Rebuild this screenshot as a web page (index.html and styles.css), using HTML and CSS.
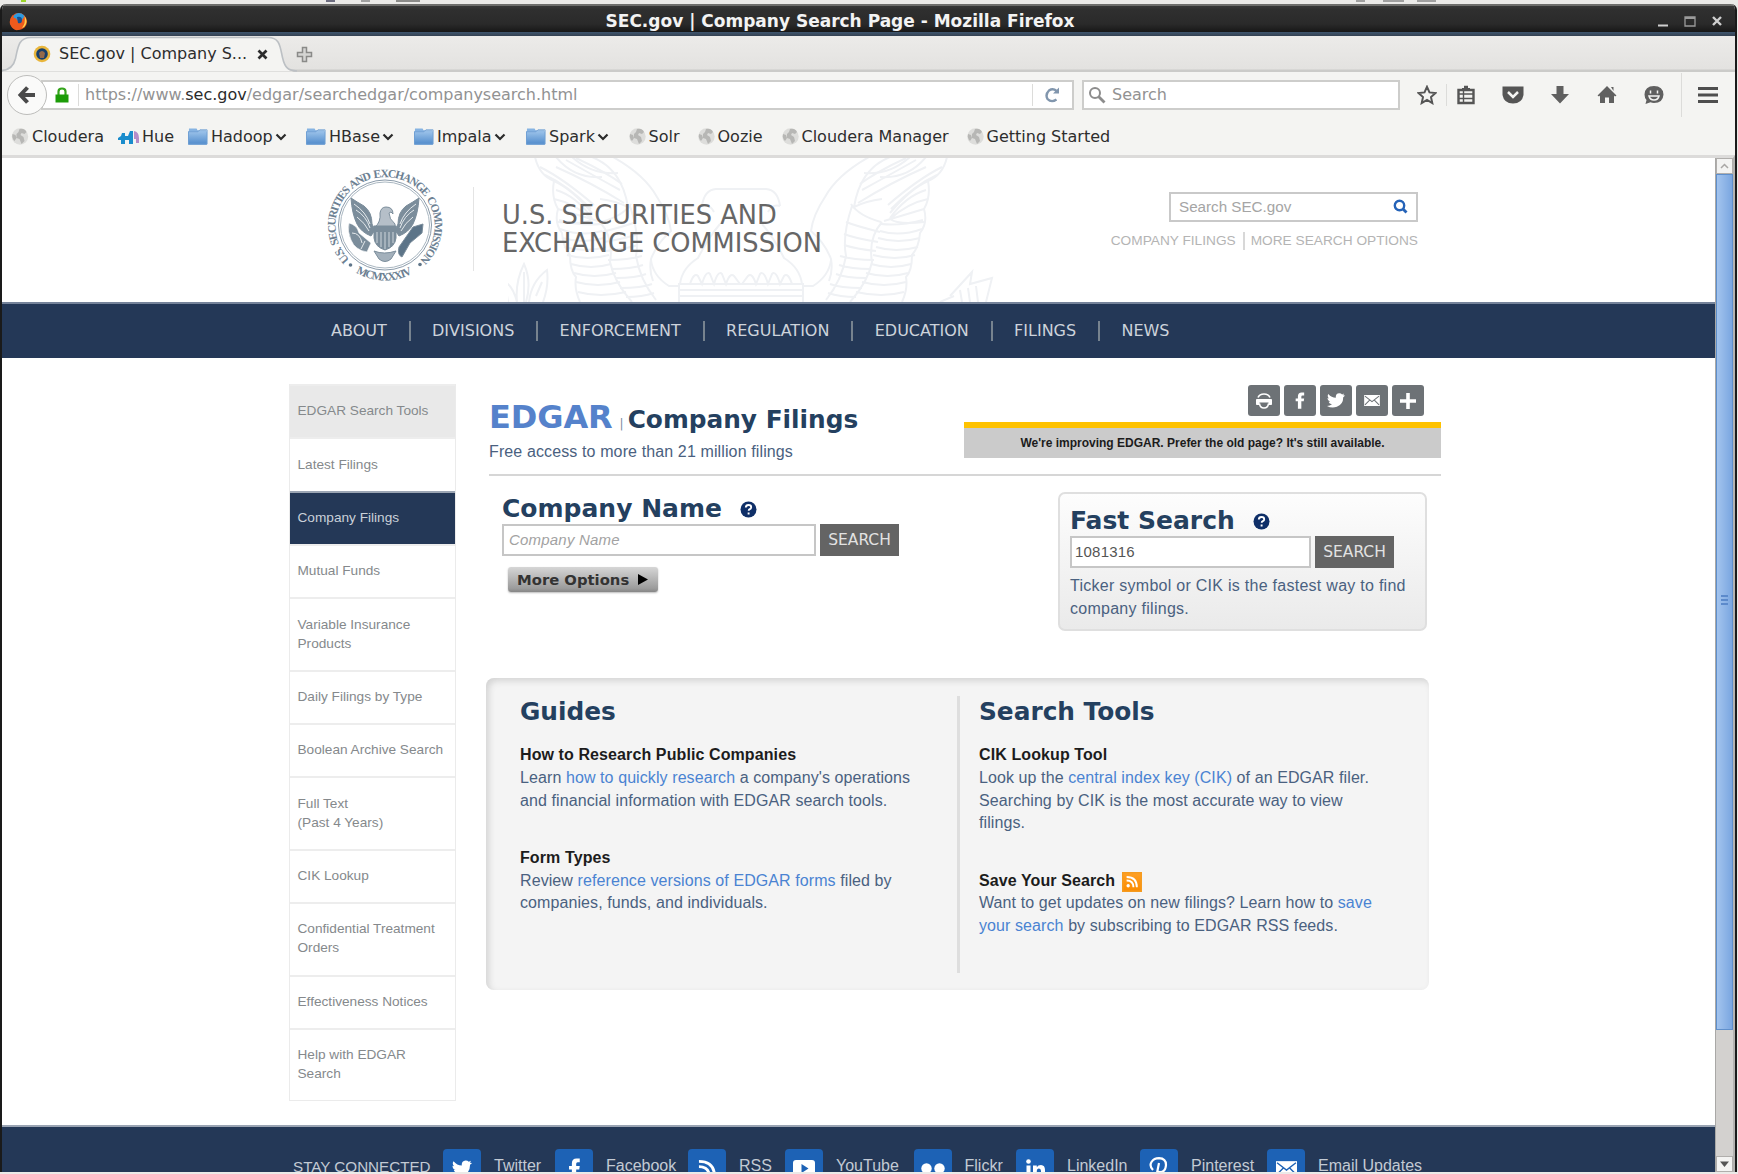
FILE: index.html
```html
<!DOCTYPE html>
<html lang="en">
<head>
<meta charset="utf-8">
<title>SEC.gov | Company Search Page</title>
<link rel="stylesheet" href="styles.css">
</head>
<body>
<svg class="defs" width="0" height="0">
  <defs>
    <linearGradient id="fold" x1="0" y1="0" x2="0" y2="1"><stop offset="0" stop-color="#9cc3ea"/><stop offset="1" stop-color="#4f8acb"/></linearGradient>
    <linearGradient id="rssg" x1="0" y1="0" x2="0" y2="1"><stop offset="0" stop-color="#ff9f24"/><stop offset="1" stop-color="#fb8c00"/></linearGradient>
    <symbol id="globe" viewBox="0 0 17 17"><circle cx="8.5" cy="8.5" r="8.2" fill="#dddddb"/><path d="M8 1q5-1 7 3l-2 2-3-1-1 2 3 2 1 4-3 3-2-5-3-1V6l2-2zM1 6l3 1 1 3-2 3Q0 10 1 6z" fill="#b7b7b5"/></symbol>
    <symbol id="folder" viewBox="0 0 21 19"><path d="M1 1h8l1 2h9v15H1z" fill="#86b3e2"/><path d="M0 4h20v14H0z" fill="url(#fold)"/><path d="M.5 17.500V4.500h10l2-2H20v15z" fill="none" stroke="#6f9fd3"/></symbol>
    <symbol id="chev" viewBox="0 0 12 8"><path d="M1.500 1.500 6 6l4.500-4.500" fill="none" stroke="#2b2b2b" stroke-width="2.200"/></symbol>
    <symbol id="help" viewBox="0 0 17 17"><circle cx="8.500" cy="8.500" r="8" fill="#0f2f68"/><path d="M5.800 6.500q.1-2.500 2.700-2.500 2.700 0 2.700 2.200 0 1.300-1.400 2-1.100.6-1.100 1.600M8.600 11.500v2" fill="none" stroke="#fff" stroke-width="1.900"/></symbol>
    <symbol id="bird" viewBox="0 0 20 16"><path d="M20 2.500q-1 1.300-2 1.800.2 8-7 10.700Q5 17 0 14q3.400 0 5.500-1.800-3-.3-3.700-2.700h1.700Q.5 8.500.5 5.200l1.700.6Q-.2 3.500 1.500.8 5 5 9.800 5 9.300.4 13.500 0q2-.1 3.300 1.200L19 .3l-1 2z"/></symbol>
    <symbol id="fb" viewBox="0 0 12 20"><path d="M3.500 20v-9H.8V7.500h2.700V5Q3.500.4 8 .4h3V4H9Q7.600 4 7.600 5.500v2H11L10.500 11H7.600v9z"/></symbol>
    <symbol id="mail" viewBox="0 0 20 14"><path d="M0 0h20v14H0z"/><path d="m1 1.500 9 7 9-7M1 12.500l6-6M19 12.500l-6-6" fill="none" stroke="var(--tile)" stroke-width="1.300"/></symbol>
    <symbol id="rss" viewBox="0 0 20 20"><circle cx="3.500" cy="16.500" r="2.700"/><path d="M1 8q11 0 11 11M1 2.500q16.500 0 16.500 16.500" fill="none" stroke="currentColor" stroke-width="3"/></symbol>
  </defs>
</svg>

<div class="desktop">
  <div class="peek"><i></i><i></i><i></i><i></i><i></i><i></i><i></i></div>
  <div class="window">
    <div class="titlebar">
      <svg class="ffx" width="19" height="19" viewBox="0 0 19 19"><circle cx="9.500" cy="9.500" r="8.500" fill="#e2521c"/><circle cx="10" cy="7.500" r="6.500" fill="#2d9be0"/><path d="M9 9q5 0 6-5 4 5 1.500 9T9 18 1 12Q0 7 4 3q0 3 3 3.500z" fill="#ee5a1d"/><path d="M15.500 4q3 4 1.500 8-1 3-4 4 4-5 2.500-12z" fill="#ffd24a"/><path d="M8 5q5-1 5 3t-4 3z" fill="#16508f"/></svg>
      <h1>SEC.gov | Company Search Page - Mozilla Firefox</h1>
      <svg class="wbtns" width="70" height="16" viewBox="0 0 70 16" fill="none" stroke="#cfcfcf"><path d="M2 12.500h10" stroke-width="2.200"/><path d="M29 4h10v9H29z" stroke="#9b9b9b" stroke-width="1.300"/><path d="M29 5h10" stroke="#9b9b9b" stroke-width="2"/><path d="m57 4 8 8m0-8-8 8" stroke-width="2.400"/></svg>
    </div>

    <div class="tabs">
      <svg width="310" height="36" viewBox="0 0 310 36"><path d="M0 35.500q11-1 13.500-12C16 10 17 1.500 29 1.500h237c12 0 12 9 14.500 20 2.500 12 6 14 14.500 14z" fill="#f4f4f2"/><path d="M0 34.500q11-1 13.500-12C16 10 17 1.500 29 1.500h237c12 0 12 9 14.500 20 2.500 11 6 13 14.500 13.500" fill="none" stroke="#bcc0c4" stroke-width="1.600"/>
        <circle cx="40" cy="18" r="8.300" fill="#e9b63c"/><circle cx="40" cy="18" r="5.800" fill="#173f6b"/><path d="M37 17q3-4 6 0l-1 5h-4z" fill="#94694a"/></svg>
      <span class="tablabel">SEC.gov | Company S...</span>
      <svg class="tabx" width="11" height="11" viewBox="0 0 11 11"><path d="m1.500 1.500 8 8m0-8-8 8" stroke="#2c2c2c" stroke-width="2.700"/></svg>
      <svg class="newtab" width="17" height="17" viewBox="0 0 17 17"><path d="M6.500 1.500h4v5h5v4h-5v5h-4v-5h-5v-4h5z" fill="#d5d5d3" stroke="#8a8a88" stroke-width="1.500"/></svg>
    </div>

    <div class="toolbar">
      <span class="back"><svg width="20" height="20" viewBox="0 0 20 20"><path d="M10.500 2.500 3.500 10l7 7.500M4 10h14" fill="none" stroke="#4a4a4a" stroke-width="4"/></svg></span>
      <div class="url">
        <svg width="14" height="16" viewBox="0 0 14 16"><path d="M3.500 8V4.500Q3.500 1.500 7 1.500t3.500 3V8" fill="none" stroke="#35a51c" stroke-width="2.200"/><path d="M.5 7.500h13v8H.5z" fill="#1c9c08"/></svg>
        <span class="vsep"></span>
        <span class="addr">https://www.<b>sec.gov</b>/edgar/searchedgar/companysearch.html</span>
        <span class="vsep last"></span>
        <svg class="reload" width="16" height="16" viewBox="0 0 16 16"><path d="M12.500 4Q9 .8 5 3.500 1 7.500 3.500 12q4 4 9 .5" fill="none" stroke="#8196ad" stroke-width="2.400"/><path d="M9 6.500h6V.5z" fill="#8196ad"/></svg>
      </div>
      <div class="find"><svg width="18" height="18" viewBox="0 0 18 18" fill="none" stroke="#8c8c8c"><circle cx="7" cy="7" r="5" stroke-width="2"/><path d="m10.500 10.500 6 6" stroke-width="2.800"/></svg><span>Search</span></div>
      <div class="tools">
        <svg width="20" height="20" viewBox="0 0 20 20"><path d="m10 1.800 2.500 5.600 6 .7-4.500 4 1.300 6L10 15l-5.300 3.100 1.300-6-4.500-4 6-.7z" fill="none" stroke="#555" stroke-width="2"/></svg>
        <span class="vsep"></span>
        <svg width="20" height="20" viewBox="0 0 20 20"><path d="M2.500 5h15v13h-15z" fill="#f4f4f2" stroke="#555" stroke-width="2.400"/><path d="M6 5V3h2V.8h4V3h2v2z" fill="#555"/><path d="M3 9h14M3 13.500h14M7.500 5v12" stroke="#555" stroke-width="1.400"/></svg>
        <svg width="22" height="20" viewBox="0 0 22 20"><path d="M.5 1.500h21V10Q20 18.500 11 18.500T.5 10z" fill="#555"/><path d="m6 7 5 5 5-5" fill="none" stroke="#f4f4f2" stroke-width="2.500"/></svg>
        <svg width="20" height="20" viewBox="0 0 20 20"><path d="M6.500 1h7v8H19l-9 9.500L1 9h5.500z" fill="#606060"/></svg>
        <svg width="20" height="20" viewBox="0 0 20 20"><path d="m10 1 9.500 9.500-1.500 1-1-1V18h-5v-5.500H8V18H3v-7.500l-1 1-1.500-1z" fill="#606060"/><path d="M14 2h2.500v4z" fill="#606060"/></svg>
        <svg width="20" height="20" viewBox="0 0 20 20"><path d="M10 1q9 0 9.500 8.500Q19 18 10 18q-2 0-3.500-.7L1.500 19l1-4Q.5 13 .5 9.500.8 1 10 1z" fill="#606060"/><path d="M6.500 5.500v3M13.500 5.500v3M5 11h10q-1 4-5 4t-5-4z" stroke="#f4f4f2" fill="none" stroke-width="1.500"/></svg>
        <span class="vsep tall"></span>
        <svg width="20" height="20" viewBox="0 0 20 20"><path d="M0 3.500h20M0 10h20M0 16.500h20" stroke="#4e4e4e" stroke-width="3"/></svg>
      </div>
    </div>

    <div class="bookmarks">
      <span><svg width="18" height="17"><use href="#globe"/></svg>Cloudera</span>
      <span><svg width="21" height="16" viewBox="0 0 21 16"><path d="M0 9l3-2 1-3h3v3h3l2-5h3v13h-4v-4H7v4H3v-4H0z" fill="#1a8ccc"/><path d="M16 2q5 1 5 7v5h-3v-4h-2z" fill="#b58cc9"/></svg>Hue</span>
      <span><svg width="20" height="19"><use href="#folder"/></svg>Hadoop<svg class="c" width="12" height="8"><use href="#chev"/></svg></span>
      <span><svg width="20" height="19"><use href="#folder"/></svg>HBase<svg class="c" width="12" height="8"><use href="#chev"/></svg></span>
      <span><svg width="20" height="19"><use href="#folder"/></svg>Impala<svg class="c" width="12" height="8"><use href="#chev"/></svg></span>
      <span><svg width="20" height="19"><use href="#folder"/></svg>Spark<svg class="c" width="12" height="8"><use href="#chev"/></svg></span>
      <span><svg width="17" height="17"><use href="#globe"/></svg>Solr</span>
      <span><svg width="17" height="17"><use href="#globe"/></svg>Oozie</span>
      <span><svg width="17" height="17"><use href="#globe"/></svg>Cloudera Manager</span>
      <span><svg width="17" height="17"><use href="#globe"/></svg>Getting Started</span>
    </div>

    <div class="view">
      <div class="page">
        <header class="head">
          <svg class="mark" width="500" height="145" viewBox="508 157 500 145" fill="none" stroke="#eff1f4" stroke-width="2">
            <g id="wing">
              <path d="M535 157q4 18 19 24-3 16 4 28-4 14 4 24 1 14 8 22 0 16 6 22-2 12 4 25M556 157q18 22 46 20M572 157q20 18 46 16M592 157q30 12 36 50-12-6-28-8M613 157q32 18 44 40 12 18 14 34-14 12-20 28-2 12 2 22"/>
              <path d="M540 167q24 12 54 38M545 175q22 10 46 34M554 181q18 8 38 32M556 190q20 6 36 28M554 199q20 4 38 20q-8 6-34 3M558 209q20 6 40 12M559 220q22 6 42 4M560 229q22 8 42 2M562 238q22 6 42 0M564 247q22 6 42 0M567 255q20 6 42 0M571 264q20 6 40 0M574 273q20 6 42 0M576 282q22 6 44 0M578 292q22 6 48 0"/>
              <path d="M566 160q32 18 54 30M576 158q30 14 46 26M556 167q36 16 68 36M601 222q22-6 30-18M602 232q24-6 34-10M604 242q24-4 34-8M606 251q20-2 32-6M608 260q20 0 34-4M611 269q20 0 32-4M616 278q20 0 30-4M620 288q22 0 32-4M626 297q16 0 28-4M600 222q14 16 10 40 4 20 22 40M630 206q10 30 6 50 4 24 20 44"/>
              <path d="M651 260q2 16 18 26h10M680 284q2-16 18-26 10-20 22-34M690 284q4-12 8-8l4 8q4-14 8-10l4 10q4-14 8-10l4 10q4-12 8-8l6 8M678 284h64M678 290h64M678 296h64M679 284v18M702 206q2-16 14-17h26M702 206q8-2 12 6"/>
            </g>
            <use href="#wing" transform="translate(1482 0) scale(-1 1)"/>
            <path d="M508 302l-3-20q8 4 12 20M517 302q-2-20 7-38 8 18 2 38M529 302q2-20 18-32 2 16-4 32M524 272v30M536 296l6-14M950 296l22-24-2 12 22-6-6 24M960 290l2 12M968 288l2 14M976 286l2 16M940 302l14-6"/>
          </svg>
          <svg class="seal" width="120" height="122" viewBox="-60 -61 120 122">
            <path id="arcTop" d="M-35.300 34.600A49.500 48.500 0 1 1 35.300 34.600" fill="none"/>
            <path id="arcBot" d="M-29 47.500A56 55.500 0 0 0 29 47.500" fill="none"/>
            <g class="ring" fill="#6c8092"><text><textPath href="#arcTop" textLength="230">U.S. SECURITIES AND EXCHANGE COMMISSION</textPath></text><text><textPath href="#arcBot" textLength="59">MCMXXXIV</textPath></text></g>
            <circle cx="-34.500" cy="40" r="1.800" fill="#60768a"/><circle cx="35" cy="39.500" r="1.800" fill="#60768a"/>
            <ellipse rx="46.500" ry="45" fill="none" stroke="#8b9baa"/><ellipse rx="44.500" ry="43" fill="none" stroke="#aab7c1"/>
            <g fill="#7b8d9b" stroke="#7b8d9b">
              <path d="M-34-27q6 4 13 8 8 6 8 18l3 6-4 6q-10-4-14-12-5-10-6-26z"/><path d="M34-27q-6 4-13 8-8 6-8 18l-3 6 4 6q10-4 14-12 5-10 6-26z"/>
              <path d="M-5-12q1-6 6-6 7 0 7 7l-2-2-2 1q0 6 6 11v6h-20V2q6-5 5-14z" fill="#b5bfc8"/>
              <path d="M-11 1h22v12Q10 22 0 25q-10-3-11-12z"/>
              <path d="M-8 7v11M-4 7v15M0 7v17M4 7v15M8 7v11" stroke="#cfd6dc" fill="none"/>
              <path d="M-36-2q8 2 10 10l12 10-4 9q-12-2-16-12-4-9-2-17z" stroke="#fff" stroke-width=".6"/><path d="m38-1-10 3-14 20q-2 8 3 10l8-14 12-10z" fill="#5c7488"/>
              <path d="M-11 26q10 4 22 0l-5 8q-6 5-12 0z" fill="#a3b0bb"/>
            </g>
            <path d="M-31-21q12 8 16 20M-29-15q10 6 14 18M-28-8q8 6 12 14M31-21q-12 8-16 20M29-15q-10 6-14 18M28-8q-8 6-12 14M-33 8q8 0 10 10M-24 24l4-8" fill="none" stroke="#e4e9ec"/>
          </svg>
          <div class="org">U.S. SECURITIES AND<br>EXCHANGE COMMISSION</div>
          <div class="sitefind">
            <div class="box"><span>Search SEC.gov</span><svg width="15" height="15" viewBox="0 0 15 15" fill="none" stroke="#2563b8"><circle cx="6.500" cy="6.500" r="4.700" stroke-width="2.400"/><path d="m9.500 9.500 4 4" stroke-width="2.800"/></svg></div>
            <div class="links"><span>COMPANY FILINGS</span><span>MORE SEARCH OPTIONS</span></div>
          </div>
        </header>
        <nav class="nav"><a>ABOUT</a><a>DIVISIONS</a><a>ENFORCEMENT</a><a>REGULATION</a><a>EDUCATION</a><a>FILINGS</a><a>NEWS</a></nav>

        <div class="body">
          <aside class="side">
            <a class="top">EDGAR Search Tools</a><a>Latest Filings</a><a class="on">Company Filings</a><a>Mutual Funds</a><a class="two">Variable Insurance Products</a><a>Daily Filings by Type</a><a>Boolean Archive Search</a><a class="two">Full Text<br>(Past 4 Years)</a><a>CIK Lookup</a><a class="two">Confidential Treatment Orders</a><a>Effectiveness Notices</a><a class="two">Help with EDGAR<br>Search</a>
          </aside>
          <main>
            <div class="intro">
              <div class="ttl">
                <h2><span class="edgar">EDGAR</span><span class="bar">|</span>Company Filings</h2>
                <p>Free access to more than 21 million filings</p>
              </div>
              <div class="aside">
                <div class="share">
                  <i><svg width="18" height="18" viewBox="0 0 18 18" fill="none" stroke="#fff"><path d="M3 5.500Q4.500 2 9 2t6 3.500" stroke-width="1.600"/><path d="M1.500 7.500h15v5h-2.500V10H4v2.500H1.500z" fill="#fff"/><path d="M4.500 11.500q.5 4.500 4.500 4.500t4.500-4.500" stroke-width="1.600"/></svg></i>
                  <i><svg width="10" height="17" fill="#fff"><use href="#fb"/></svg></i>
                  <i><svg width="18" height="15" fill="#fff"><use href="#bird"/></svg></i>
                  <i><svg width="16" height="11" fill="#fff"><use href="#mail"/></svg></i>
                  <i><svg width="16" height="16" viewBox="0 0 16 16"><path d="M8 0v16M0 8h16" stroke="#fff" stroke-width="3.600"/></svg></i>
                </div>
                <div class="notice">We're improving EDGAR. Prefer the old page? It's still available.</div>
              </div>
            </div>
            <div class="searches">
              <div class="byname">
                <h3>Company Name<svg width="17" height="17"><use href="#help"/></svg></h3>
                <div class="row"><div class="inp hint">Company Name</div><div class="btn">SEARCH</div></div>
                <div class="more">More Options<svg width="10" height="11" viewBox="0 0 10 11"><path d="M0 0v11l10-5.500z"/></svg></div>
              </div>
              <div class="fast">
                <h3>Fast Search<svg width="17" height="17"><use href="#help"/></svg></h3>
                <div class="row"><div class="inp">1081316</div><div class="btn">SEARCH</div></div>
                <p>Ticker symbol or CIK is the fastest way to find<br>company filings.</p>
              </div>
            </div>
            <div class="panel">
              <section>
                <h3>Guides</h3>
                <h4>How to Research Public Companies</h4>
                <p>Learn <a>how to quickly research</a> a company's operations<br>and financial information with EDGAR search tools.</p>
                <h4>Form Types</h4>
                <p>Review <a>reference versions of EDGAR forms</a> filed by<br>companies, funds, and individuals.</p>
              </section>
              <section class="r">
                <h3>Search Tools</h3>
                <h4>CIK Lookup Tool</h4>
                <p>Look up the <a>central index key (CIK)</a> of an EDGAR filer.<br>Searching by CIK is the most accurate way to view<br>filings.</p>
                <h4>Save Your Search<svg width="20" height="20" viewBox="0 0 20 20"><path d="M0 0h20v20H0z" fill="#f59b20"/><path d="M1.500 1.500h17v17h-17z" fill="url(#rssg)"/><g color="#fff" fill="#fff" transform="translate(4 3.500) scale(.62)"><use href="#rss" width="20" height="20"/></g></svg></h4>
                <p>Want to get updates on new filings? Learn how to <a>save</a><br><a>your search</a> by subscribing to EDGAR RSS feeds.</p>
              </section>
            </div>
          </main>
        </div>

        <footer class="foot">
          <span class="stay">STAY CONNECTED</span>
          <span><i><svg width="20" height="17"><use href="#bird"/></svg></i>Twitter</span>
          <span><i><svg width="13" height="21"><use href="#fb"/></svg></i>Facebook</span>
          <span><i><svg width="19" height="19"><use href="#rss"/></svg></i>RSS</span>
          <span><i><svg width="22" height="17" viewBox="0 0 22 17"><path d="M3 0h16q3 0 3 3v11q0 3-3 3H3q-3 0-3-3V3q0-3 3-3z"/><path d="m8.500 4 7 4.500-7 4.500z" fill="#1d62b5"/></svg></i>YouTube</span>
          <span><i><svg width="24" height="11" viewBox="0 0 24 11"><circle cx="5.500" cy="5.500" r="5.200"/><circle cx="18.500" cy="5.500" r="5.200"/></svg></i>Flickr</span>
          <span><i><svg width="19" height="19" viewBox="0 0 19 19"><circle cx="2.500" cy="2.500" r="2.300"/><path d="M.5 6.500h4V19h-4zM7 6.500h3.800v1.700Q12 6 15 6q4 .2 4 5v8h-4v-7q0-2.500-2-2.500-2.200 0-2.200 2.800V19H7z"/></svg></i>LinkedIn</span>
          <span><i><svg width="20" height="22" viewBox="0 0 20 22"><path d="M4 13Q0 9 2.500 5 5 1.200 10 1.200q7 .3 7 6.800-.5 7-6 7.200-2 0-3-1.500M10 6 7 21" fill="none" stroke="#fff" stroke-width="2.200"/></svg></i>Pinterest</span>
          <span><i><svg width="21" height="15"><use href="#mail"/></svg></i>Email Updates</span>
        </footer>
      </div>
      <div class="scroll">
        <b><svg width="9" height="6" viewBox="0 0 9 6"><path d="m1 5 3.500-3.500L8 5" fill="none" stroke="#a9a7a5" stroke-width="1.500"/></svg></b>
        <div class="thumb"><i></i><i></i><i></i></div>
        <div class="track"></div>
        <b><svg width="9" height="6" viewBox="0 0 9 6"><path d="M0 .5h9L4.500 6z" fill="#555"/></svg></b>
      </div>
    </div>
  </div>
</div>
</body>
</html>
```
FILE: styles.css
```css
* { box-sizing: border-box; }
body, h1, h2, h3, h4, p { margin: 0; }
svg { display: block; flex: none; }
body { width: 1738px; height: 1174px; overflow: hidden; font-family: "Liberation Sans", Arial, sans-serif; }
.defs { position: absolute; }

.desktop { height: 1174px; background: #ebeae8; overflow: hidden; display: flex; flex-direction: column; }
.peek { height: 4px; flex: none; display: grid; grid-template-columns: 21px 305px 35px 35px 960px 33px 40px 200px; align-items: start; }
.peek i { height: 2px; width: 9px; background: #a0a0a0; }
.peek i:nth-child(1) { margin-left: 21px; width: 5px; background: #9bd42a; }
.peek i:nth-child(2) { margin-left: 305px; background: #6d6d80; }
.peek i:nth-child(3) { margin-left: 35px; }
.peek i:nth-child(4) { margin-left: 35px; width: 24px; background: #8b8b89; }
.peek i:nth-child(5) { margin-left: 960px; }
.peek i:nth-child(6) { margin-left: 27px; width: 21px; }
.peek i:nth-child(7) { margin-left: 28px; width: 19px; }

.window { width: 1737px; height: 1168px; border: solid #1a1a1a; border-width: 0 2px; border-radius: 6px 6px 0 0; display: flex; flex-direction: column; background: #f4f4f2; overflow: hidden; }
.titlebar { height: 32px; flex: none; display: flex; align-items: center; padding: 2px 7px 0; color: #f3f3f3; background: linear-gradient(#6e6e6c 0 2px, #383838 2px, #2f2f2f 6px, #2a2a2a 20px, #171717 28px, #3f566f 28px, #344050 32px); }
.titlebar h1 { flex: 1; text-align: center; padding-right: 55px; font: bold 17px/24px "DejaVu Sans", sans-serif; }
.ffx { margin-right: -19px; }
.wbtns { margin-left: -70px; margin-right: 2px; }

.tabs { height: 36px; flex: none; display: flex; align-items: center; background: linear-gradient(#ecebe9, #e3e2e0 33px, #cbcbc9 34px, #cbcbc9); font: 16px/20px "DejaVu Sans", sans-serif; color: #2d2d2d; }
.tablabel { margin-left: -253px; width: 198px; }
.tabx { margin-top: 1px; }
.newtab { margin-left: 28px; }

.toolbar { height: 45px; flex: none; display: flex; align-items: center; font: 16px/20px "DejaVu Sans", sans-serif; color: #929292; }
.back { width: 40px; height: 40px; margin-left: 5px; border: 1.500px solid #bdbdbb; border-radius: 50%; background: #fafaf9; display: grid; place-items: center; z-index: 1; }
.url { width: 1033px; height: 30px; margin-left: -6px; padding-left: 12px; border: 2px solid #cdcdcb; background: #fff; display: flex; align-items: center; }
.vsep { width: 1px; height: 22px; background: #dcdcda; }
.url .vsep { margin: 0 6px 0 9px; }
.url .last { margin: 0 11px 0 auto; }
.addr b { font-weight: normal; color: #2b2b2b; }
.reload { margin-right: 12px; }
.find { width: 318px; height: 30px; margin-left: 8px; padding-left: 4px; border: 2px solid #cdcdcb; background: #fff; display: flex; align-items: center; gap: 6px; }
.tools { display: grid; grid-template-columns: 29px 10px 46px 48px 47px 47px 37px 17px 20px; align-items: center; margin-left: 17px; }
.tools .tall { height: 44px; }

.bookmarks { height: 38px; flex: none; padding: 1px 0 0 9px; display: grid; grid-template-columns: 107px 70px 118px 108px 112px 102.500px 69px 84px 185px 160px; align-items: center; font: 16px/20px "DejaVu Sans", sans-serif; color: #2d2d2d; }
.bookmarks span { display: flex; align-items: center; gap: 3px; white-space: nowrap; }
.bookmarks .c { margin-left: -1px; }

.view { height: 1017px; flex: none; border-top: 3px solid #dcdbda; display: flex; border-right: 2px solid #b4b3b1; }
.page { width: 1713px; background: #fff; display: flex; flex-direction: column; overflow: hidden; }
.scroll { flex: 1; background: #d3d1cf; display: flex; flex-direction: column; border-left: 1px solid #a9a8a6; }
.scroll b { height: 16px; flex: none; background: #f3f3f2; border: 1px solid #b0aeac; display: grid; place-items: center; }
.thumb { height: 856px; border: 1px solid #5f8fcb; background: linear-gradient(90deg, #a3c4ee, #7aa6e0); display: flex; flex-direction: column; gap: 2px; align-items: center; justify-content: center; padding-bottom: 4px; }
.thumb i { width: 7px; height: 2px; background: #5c8acb; }
.track { flex: 1; }

.head { height: 144px; flex: none; display: flex; position: relative; }
.mark { position: absolute; left: 506px; top: -1px; }
.seal { margin: 6px 0 0 323px; }
.ring { font: bold 11.500px "Liberation Serif", serif; word-spacing: 2px; }
.org { margin: 29px 0 0 28px; height: 84px; padding: 14px 0 0 28px; border-left: 1.500px solid #e4e4e4; font: 25.700px/28.300px "DejaVu Sans", sans-serif; color: #666; white-space: nowrap; position: relative; }
.sitefind { position: absolute; right: 297px; top: 34px; display: flex; flex-direction: column; align-items: flex-end; }
.sitefind .box { width: 249px; height: 30px; border: 2px solid #c9c9c9; padding: 0 8px 2px; display: flex; align-items: center; justify-content: space-between; font-size: 15.200px; color: #a5a5a5; }
.links { display: flex; margin-top: 10px; font-size: 13.700px; line-height: 18px; color: #b4b4b4; }
.links span + span { border-left: 2px solid #d8d8d8; margin-left: 7px; padding-left: 6px; }
.nav { height: 56px; flex: none; border-top: 2px solid #75839a; background: #243857; display: flex; align-items: center; padding: 0 0 0 307px; font: 16px/20px "DejaVu Sans", sans-serif; color: #cdd3db; }
.nav a { padding: 0 22px; }
.nav a + a { border-left: 2px solid #77838f; padding-left: 21.300px; }

.body { height: 767px; flex: none; padding: 26px 0 0 287px; display: flex; align-items: flex-start; }
.side { width: 167px; border: 1.500px solid #ebebeb; border-top: 0; font-size: 13.650px; line-height: 19px; color: #85898c; }
.side a { display: flex; align-items: center; height: 53.350px; padding: 0 3px 2px 7.500px; border-top: 2px solid #ededed; }
.side .two { height: 72.400px; }
.side .top { background: #e9e9e9; }
.side .on { background: #243857; color: #c9d0d9; border-top-color: #9ca6b4; }

main { margin-left: 29px; width: 957px; color: #4a6180; font-size: 16px; line-height: 22.800px; letter-spacing: .09px; }
h2, h3 { font-family: "DejaVu Sans", sans-serif; font-weight: bold; color: #24405f; letter-spacing: 0; }
.intro { height: 92px; margin: 0 1px 0 4px; border-bottom: 2px solid #d6d6d6; display: flex; justify-content: space-between; }
.ttl h2 { font-size: 24.800px; line-height: 40px; margin-top: 13px; }
.edgar { font-size: 32px; color: #5582cb; letter-spacing: -.1px; }
.bar { font: 12px "DejaVu Sans", sans-serif; color: #7c8ba0; margin: 0 4px 0 7px; }
.ttl p { line-height: 20px; margin-top: 2px; letter-spacing: .12px; }
.aside { width: 477px; padding-top: 1px; }
.share { display: flex; gap: 4px; justify-content: flex-end; padding-right: 17px; }
.share i { --tile: #6d7276; width: 32px; height: 31px; border-radius: 3px; background: #6d7276; display: grid; place-items: center; }
.notice { margin-top: 6px; height: 36px; border-top: 6px solid #fec200; background: #cbcbcb; text-align: center; color: #1c1c1c; font: bold 12px/30px "Liberation Sans", Arial, sans-serif; letter-spacing: 0; }

.searches { display: flex; justify-content: space-between; padding: 16px 15px 0 17px; height: 202px; }
h3 { font-size: 25px; line-height: 30px; display: flex; align-items: center; }
h3 svg { margin-left: 18px; }
.byname h3 { margin-top: 2px; }
.row { display: flex; gap: 4px; }
.inp { width: 314px; height: 32px; border: 2px solid #c6c6c6; background: #fff; font-size: 15px; line-height: 28px; padding-left: 3px; color: #555; letter-spacing: .2px; }
.inp.hint { font-style: italic; color: #a2a2a2; padding-left: 5px; }
.btn { width: 79px; height: 32px; background: #646464; color: #e2e2e2; font: 15.500px/32px "DejaVu Sans", sans-serif; text-align: center; letter-spacing: 0; }
.more { margin: 11px 0 0 6px; width: 150px; height: 25px; border-radius: 3px; background: linear-gradient(#d6d6d6, #9c9c9c 85%, #868686); box-shadow: 0 1px 2px #bbb; display: flex; align-items: center; padding-left: 9px; gap: 9px; font: bold 14.800px "DejaVu Sans", sans-serif; letter-spacing: 0; color: #333; }
.fast { width: 369px; height: 139px; border: 2px solid #dfdfdf; border-radius: 7px; background: linear-gradient(#fdfdfd, #eaeaea); padding: 12px 0 0 10px; }
.fast .inp { width: 241px; }
.fast p { margin-top: 7px; white-space: nowrap; letter-spacing: .27px; }

.panel { width: 943px; height: 312px; border-radius: 8px; background: #f4f4f4; box-shadow: inset 3px 3px 6px #d4d4d4; display: flex; padding: 18px 0 17px 34px; margin-left: 1px; }
.panel section { width: 437px; white-space: nowrap; }
.panel .r { border-left: 3px solid #dedede; padding-left: 19px; }
h4 { font-size: 16px; line-height: 22.800px; color: #1c1c1c; display: flex; align-items: center; gap: 7px; letter-spacing: .1px; }
.panel h3 { padding-top: 1px; margin-bottom: 17px; font-size: 24.800px; }
.panel p + h4 { margin-top: 34.500px; }
h4 svg { margin-bottom: -4px; margin-top: -2px; }
.panel a { color: #4a83d2; }

.foot { flex: 1; border-top: 2px solid #9aa4b3; background: #243857; padding: 22px 0 0 291px; display: grid; grid-template-columns: 150px 112px 133px 97px 128.500px 102.500px 124px 127px 160px; align-items: start; color: #c3cad4; font-size: 16px; }
.foot span { display: flex; align-items: center; height: 34px; white-space: nowrap; gap: 13px; }
.foot .stay { font-size: 15.200px; }
.foot i { --tile: #1d62b5; width: 38px; height: 38px; margin-bottom: -4px; border-radius: 4px; background: #1d62b5; display: grid; place-items: center; fill: #fff; color: #fff; }
```
